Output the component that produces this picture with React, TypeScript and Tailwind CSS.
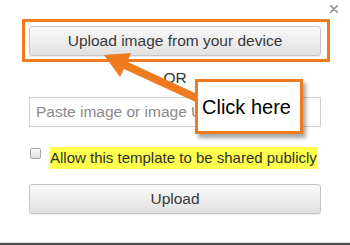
import React from "react";

export default function App() {
  return (
    <div
      className="relative w-[350px] h-[245px] bg-white overflow-hidden"
      style={{ fontFamily: '"Liberation Sans", Arial, sans-serif' }}
    >
      <div className="flex flex-col h-full">
        <div className="flex justify-end h-[26px] pr-[12px] pt-[5px]">
          <svg width="8" height="8" viewBox="0 0 8 8" aria-label="close">
            <path d="M0.5 0.5 L7.5 7.5 M7.5 0.5 L0.5 7.5" stroke="#9a9a9a" strokeWidth="1.8" strokeLinecap="round" />
          </svg>
        </div>
        <button className="mx-[29px] h-[30px] rounded-[3px] border border-[#c6c6c6] bg-gradient-to-b from-[#f9f9f9] to-[#e1e1e1] text-[15.5px] text-[#3a3a3a] leading-none shadow-[0_1px_1px_rgba(0,0,0,0.08)]">
          Upload image from your device
        </button>
        <div className="mt-[13px] h-[18px] text-center text-[15.5px] leading-[18px] text-[#333]">OR</div>
        <div className="mt-[10px] mx-[29px] h-[30px] border border-[#cfcfcf] flex items-center px-[6px] text-[15.5px] text-[#8a8a8a]">
          Paste image or image URL
        </div>
        <div className="mt-[20px] mx-[30px] flex items-start gap-[9px] h-[22px]">
          <span className="mt-[1px] w-[11px] h-[11px] rounded-[2px] border border-[#a9a9a9] bg-gradient-to-b from-[#fdfdfd] to-[#dcdcdc]" />
          <span className="bg-[#ffff4d] h-[22px] leading-[22px] text-[15px] text-[#2f2f2f]">
            Allow this template to be shared publicly
          </span>
        </div>
        <button className="mt-[15px] mx-[29px] h-[30px] rounded-[3px] border border-[#c6c6c6] bg-gradient-to-b from-[#f9f9f9] to-[#e1e1e1] text-[15.5px] text-[#3a3a3a] leading-none shadow-[0_1px_1px_rgba(0,0,0,0.08)]">
          Upload
        </button>
        <div className="flex-1" />
        <div className="h-[1px] bg-[#e2e2e2]" />
        <div className="h-[2px] bg-[#4a4a4a]" />
      </div>

      {/* annotation: orange box */}
      <div className="absolute left-[22px] top-[19px] w-[308px] h-[43px] border-[3px] border-[#ef7b1f] pointer-events-none" />

      {/* annotation: arrow */}
      <svg className="absolute left-0 top-0 pointer-events-none" width="350" height="245" viewBox="0 0 350 245">
        <polygon
          points="104,55 131,53 127.4,61.8 206.7,98.4 203.3,105.6 124,69 120,77"
          fill="#ef7b1f"
        />
      </svg>

      {/* annotation: callout */}
      <div className="absolute left-[195px] top-[79px] w-[108px] h-[55px] border-[3px] border-[#ef7b1f] bg-white shadow-[3px_4px_4px_rgba(0,0,0,0.35)] flex items-center pl-[4px] pt-[1px]">
        <span className="text-[20px] text-black leading-none">Click here</span>
      </div>
    </div>
  );
}
